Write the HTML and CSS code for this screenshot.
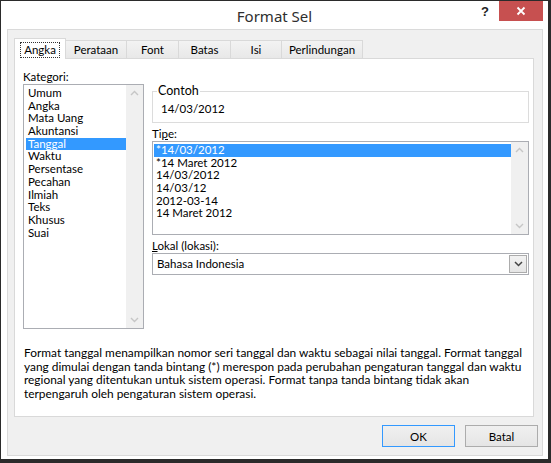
FILE: index.html
```html
<!DOCTYPE html>
<html lang="id">
<head>
    <meta charset="UTF-8">
    <meta name="viewport" content="width=device-width, initial-scale=1.0">
    <title>Format Sel</title>
    <link rel="stylesheet" href="styles.css">
</head>
<body>
    <div class="window">
        <div class="titlebar">
            <span></span>
            <span class="title">Format Sel</span>
            <div class="caption-buttons">
                <span class="help">?</span>
                <span class="close">
                    <svg width="10" height="10" viewBox="0 0 10 10"><path d="M1.5 1.5 L8.5 8.5 M8.5 1.5 L1.5 8.5" stroke="#fff" stroke-width="1.8" fill="none"/></svg>
                </span>
            </div>
        </div>

        <div class="frame">
            <div class="tabs">
                <div class="tab active" style="width: 52px"><span class="focus">Angka</span></div>
                <div class="tab" style="width: 62px">Perataan</div>
                <div class="tab" style="width: 53px">Font</div>
                <div class="tab" style="width: 53px">Batas</div>
                <div class="tab" style="width: 52px">Isi</div>
                <div class="tab" style="width: 82px">Perlindungan</div>
            </div>

            <div class="tab-page">
                <div class="main">
                    <div class="left">
                        <label class="field-label">Kate<u>g</u>ori:</label>
                        <div class="listbox category">
                            <div class="items">
                                <div class="item">Umum</div>
                                <div class="item">Angka</div>
                                <div class="item">Mata Uang</div>
                                <div class="item">Akuntansi</div>
                                <div class="item selected">Tanggal</div>
                                <div class="item">Waktu</div>
                                <div class="item">Persentase</div>
                                <div class="item">Pecahan</div>
                                <div class="item">Ilmiah</div>
                                <div class="item">Teks</div>
                                <div class="item">Khusus</div>
                                <div class="item">Suai</div>
                            </div>
                            <div class="scrollbar">
                                <svg width="17" height="17" viewBox="0 0 17 17"><polyline points="5,10 8.5,6.5 12,10" stroke="#c6c6c6" stroke-width="1.4" fill="none"/></svg>
                                <svg width="17" height="17" viewBox="0 0 17 17"><polyline points="5,7 8.5,10.5 12,7" stroke="#c6c6c6" stroke-width="1.4" fill="none"/></svg>
                            </div>
                        </div>
                    </div>

                    <div class="right">
                        <fieldset class="sample">
                            <legend>Contoh</legend>
                            <div class="sample-value">14/03/2012</div>
                        </fieldset>

                        <label class="field-label">Ti<u>p</u>e:</label>
                        <div class="listbox types">
                            <div class="items">
                                <div class="item selected">*14/03/2012</div>
                                <div class="item">*14 Maret 2012</div>
                                <div class="item">14/03/2012</div>
                                <div class="item">14/03/12</div>
                                <div class="item">2012-03-14</div>
                                <div class="item">14 Maret 2012</div>
                            </div>
                            <div class="scrollbar">
                                <svg width="17" height="17" viewBox="0 0 17 17"><polyline points="5,10 8.5,6.5 12,10" stroke="#c6c6c6" stroke-width="1.4" fill="none"/></svg>
                                <svg width="17" height="17" viewBox="0 0 17 17"><polyline points="5,7 8.5,10.5 12,7" stroke="#c6c6c6" stroke-width="1.4" fill="none"/></svg>
                            </div>
                        </div>

                        <label class="field-label"><u>L</u>okal (lokasi):</label>
                        <div class="combo">
                            <span class="combo-text">Bahasa Indonesia</span>
                            <span class="drop">
                                <svg width="9" height="6" viewBox="0 0 9 6"><polyline points="1,1 4.5,4.5 8,1" stroke="#444" stroke-width="1.5" fill="none"/></svg>
                            </span>
                        </div>
                    </div>
                </div>

                <p class="desc">Format tanggal menampilkan nomor seri tanggal dan waktu sebagai nilai tanggal. Format tanggal<br>yang dimulai dengan tanda bintang (*) merespon pada perubahan pengaturan tanggal dan waktu<br>regional yang ditentukan untuk sistem operasi. Format tanpa tanda bintang tidak akan<br>terpengaruh oleh pengaturan sistem operasi.</p>
            </div>

            <div class="buttons">
                <button class="default">OK</button>
                <button>Batal</button>
            </div>
        </div>
    </div>
</body>
</html>
```

FILE: styles.css
```css
* {
    box-sizing: border-box;
}
body {
    margin: 0;
    font-family: "Segoe UI", Lato, sans-serif;
    font-size: 11.5px;
    color: #000;
    background-color: #fff;
}
.window {
    width: 551px;
    height: 463px;
    display: flex;
    flex-direction: column;
    background-color: #fff;
    border-style: solid;
    border-color: #2b2b2b;
    border-width: 1px 3px 4px 1px;
}
.titlebar {
    height: 28px;
    flex-shrink: 0;
    display: grid;
    grid-template-columns: 1fr auto 1fr;
    align-items: start;
}
.title {
    font-family: "Segoe UI", "Noto Sans", sans-serif;
    font-size: 15px;
    line-height: 31px;
    color: #2e2e2e;
}
.caption-buttons {
    display: flex;
    justify-content: flex-end;
    margin-right: 5px;
}
.help {
    width: 28px;
    height: 20px;
    text-align: center;
    font-family: "Liberation Sans", sans-serif;
    font-weight: bold;
    font-size: 13px;
    line-height: 22px;
    color: #222;
}
.close {
    width: 44px;
    height: 20px;
    background-color: #c75050;
    display: flex;
    align-items: center;
    justify-content: center;
}
/* grey client area */
.frame {
    flex: 1;
    min-height: 0;
    margin: 0 5px 3px 6px;
    padding: 8px 6px 8px 6px;
    background-color: #f0f0f0;
    border: 1px solid #dadada;
    display: flex;
    flex-direction: column;
}
.tabs {
    display: flex;
    align-items: flex-end;
    padding-left: 1px;
}
.tab {
    height: 18px;
    border: 1px solid #d9d9d9;
    border-bottom: none;
    margin-right: -1px;
    background: linear-gradient(#f3f3f3, #e8e8e8);
    text-align: center;
    line-height: 17px;
    color: #000;
}
.tab.active {
    height: 21px;
    margin-bottom: -1px;
    margin-left: -1px;
    background: #fff;
    position: relative;
    z-index: 1;
    padding-top: 2px;
}
.focus {
    border: 1px dotted #333;
    padding: 0 3px;
    line-height: 14px;
    display: inline-block;
}
.tab-page {
    flex: 1;
    min-height: 0;
    margin-right: 2px;
    background-color: #fff;
    border: 1px solid #d9d9d9;
    padding: 10px 4px 0 8px;
}
.main {
    display: flex;
    gap: 8px;
}
.left {
    width: 121px;
}
.right {
    flex: 1;
    padding-top: 15px;
}
.field-label {
    display: block;
    line-height: 15px;
}
.listbox {
    display: flex;
    border: 1px solid #abadb3;
    background-color: #fff;
}
.listbox.category {
    height: 245px;
}
.listbox.types {
    height: 94px;
}
.items {
    flex: 1;
    padding: 2px 0 0 1px;
}
.category .items {
    padding-left: 2px;
}
.item {
    line-height: 12.7px;
    height: 12.7px;
    padding-left: 2px;
    white-space: nowrap;
}
.item.selected {
    background-color: #3399ff;
    color: #fff;
}
.scrollbar {
    width: 17px;
    background-color: #f0f0f0;
    display: flex;
    flex-direction: column;
    justify-content: space-between;
}
.scrollbar svg {
    display: block;
}
.sample {
    margin: 0;
    padding: 4px 4px 4px 8px;
    border: 1px solid #dcdcdc;
    height: 39px;
}
.sample legend {
    padding: 0 1px;
    margin-left: -4px;
    font-size: 12.5px;
    line-height: 14px;
}
.sample-value {
    line-height: 14px;
}
.types + .field-label {
    margin-top: 3px;
}
.sample + .field-label {
    margin-top: 3px;
}
.combo {
    height: 22px;
    display: flex;
    border: 1px solid #abadb3;
    background-color: #fff;
}
.combo-text {
    flex: 1;
    padding-left: 4px;
    line-height: 20px;
}
.drop {
    width: 18px;
    margin: 1px;
    border: 1px solid #acacac;
    background: linear-gradient(#f2f2f2, #e5e5e5);
    display: flex;
    align-items: center;
    justify-content: center;
}
.desc {
    margin: 17px 0 0 1px;
    font-size: 11.9px;
    line-height: 13.6px;
    white-space: nowrap;
}
.buttons {
    display: flex;
    justify-content: flex-end;
    gap: 10px;
    margin: 8px -2px 0 0;
}
button {
    width: 73px;
    height: 22px;
    font-family: "Segoe UI", Lato, sans-serif;
    font-size: 11.5px;
    color: #000;
    border: 1px solid #acacac;
    background: linear-gradient(#f0f0f0, #e5e5e5);
    padding: 0;
}
button.default {
    border-color: #3399ff;
}
```
